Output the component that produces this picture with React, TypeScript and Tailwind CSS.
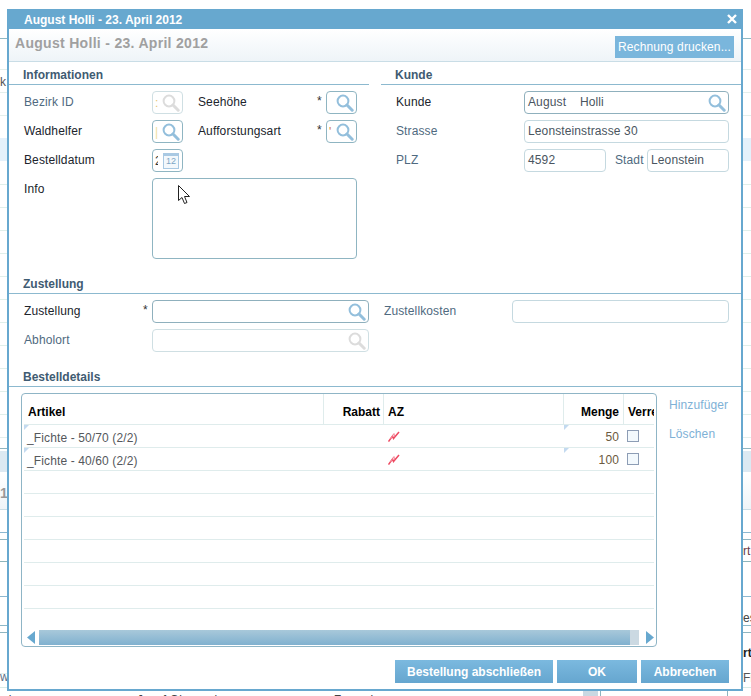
import type { ReactNode } from "react";

const bgLines = [
  { top: 38, color: "#8db8c4" },
  { top: 69, color: "#e4efec" },
  { top: 92, color: "#e4efec" },
  { top: 115, color: "#e4efec" },
  { top: 184, color: "#e0efea" },
  { top: 207, color: "#e0efea" },
  { top: 230, color: "#e0efea" },
  { top: 253, color: "#e0efea" },
  { top: 276, color: "#e0efea" },
  { top: 299, color: "#e0efea" },
  { top: 322, color: "#e0efea" },
  { top: 345, color: "#e0efea" },
  { top: 368, color: "#e0efea" },
  { top: 391, color: "#e0efea" },
  { top: 414, color: "#e0efea" },
  { top: 437, color: "#e4efec" },
  { top: 448, color: "#8fb5c0" },
  { top: 509, color: "#c9dde6" },
  { top: 532, color: "#8db8d0" },
  { top: 539, color: "#8fb5c0" },
  { top: 561, color: "#8db5bb" },
  { top: 596, color: "#8db8d0" },
  { top: 625, color: "#8db8c8" },
  { top: 632, color: "#8fb5c0" },
  { top: 673, color: "#e4efec" },
  { top: 687, color: "#d8ebe6" },
];

const rows = [
  { name: "_Fichte - 50/70 (2/2)", qty: "50" },
  { name: "_Fichte - 40/60 (2/2)", qty: "100" },
  null,
  null,
  null,
  null,
  null,
  null,
];

function SearchIcon({ off }: { off?: boolean }) {
  const c = off ? "#dcdcdc" : "#93bfdc";
  return (
    <svg width="18" height="18" viewBox="0 0 18 18" fill="none" className="shrink-0">
      <circle cx="7" cy="7" r="5.4" stroke={c} strokeWidth="2" />
      <path d="M11 11L16.2 16.2" stroke={c} strokeWidth="3" strokeLinecap="round" />
    </svg>
  );
}

function Label({ children, w, dim, className }: { children: ReactNode; w: string; dim?: boolean; className?: string }) {
  return (
    <div className={`${w} ${dim ? "text-[#4f6a80]" : "text-[#20242c]"} shrink-0 pb-[2px] ${className ?? ""}`}>{children}</div>
  );
}

function Star() {
  return <div className="w-[9px] shrink-0 text-[#333] leading-[14px] self-start mt-[3px]">*</div>;
}

function SectionHead({ children, className }: { children: ReactNode; className?: string }) {
  return (
    <div className={`h-[23px] pt-[4px] border-b border-[#8cb9cf] flex items-center font-bold tracking-normal text-[#3f5b72] ${className ?? ""}`}>
      {children}
    </div>
  );
}

function MiniSearch({ off, bit, bitColor }: { off?: boolean; bit?: string; bitColor?: string }) {
  return (
    <div className={`w-[31px] h-[23px] shrink-0 rounded-[4px] border flex items-center justify-between pl-[2px] pr-[2px] overflow-hidden ${off ? "border-[#cfdfe3]" : "border-[#8fb5c2]"}`}>
      <span className={`w-[3px] overflow-hidden ${bitColor ?? ""}`}>{bit}</span>
      <SearchIcon off={off} />
    </div>
  );
}

function Lightning() {
  return (
    <svg width="12" height="11" viewBox="0 0 12 11" fill="none">
      <path d="M0.5 10.5L4.5 5L5.5 7.5L11 1" stroke="#ee4a62" strokeWidth="1.5" />
      <path d="M2.5 8L6 2.5L6.5 5" stroke="#f58a9a" strokeWidth="1" />
    </svg>
  );
}

function Corner({ className }: { className?: string }) {
  return <div className={`absolute top-0 w-0 h-0 border-t-[5px] border-r-[5px] border-t-[#c3daf0] border-r-transparent ${className ?? ""}`} />;
}

function Btn({ children, w }: { children: ReactNode; w: string }) {
  return (
    <div className={`${w} h-[23px] flex items-center justify-center font-bold tracking-normal text-white bg-gradient-to-b from-[#7bb9df] to-[#66a6cf]`}>
      {children}
    </div>
  );
}

export default function App() {
  return (
    <div className="relative w-[751px] h-[696px] overflow-hidden bg-white text-[12px] tracking-[0.12px] font-['Liberation_Sans',Arial,sans-serif]">
      {/* page behind the dialog */}
      {bgLines.map((l) => (
        <div key={l.top} className="absolute left-0 right-0 h-px" style={{ top: l.top, background: l.color }} />
      ))}
      <div className="absolute left-0 right-0 top-[138px] h-[23px] bg-[#e4f1fb]" />
      <div className="absolute left-0 right-0 top-[451px] h-[21px] bg-[#dce9f2]" />
      <div className="absolute left-0 right-0 top-[473px] h-[36px] bg-gradient-to-b from-white to-[#eef4f8]" />
      <div className="absolute left-0 top-[73px] text-[#555]">k</div>
      <div className="absolute left-0 top-[483px] text-[14px] font-bold text-[#999]">1</div>
      <div className="absolute left-0 top-[668px] text-[#5a6f88]">w</div>
      <div className="absolute left-[743px] top-[542px] text-[#6b3b45]">rt</div>
      <div className="absolute left-[743px] top-[609px] text-[#444]">es</div>
      <div className="absolute left-[743px] top-[644px] font-bold text-[#222]">rt</div>
      <div className="absolute left-[743px] top-[669px] text-[#555]">Fi</div>
      <div className="absolute left-0 top-[691px] text-[#444]">wig</div>
      <div className="absolute left-[137px] top-[691px] text-[#444]">Josef Obergruber</div>
      <div className="absolute left-[334px] top-[691px] text-[#444]">Zugewiesen</div>
      <div className="absolute left-[583px] top-[691px] w-[15px] h-[5px] bg-[#c9d8e2]" />
      <div className="absolute left-[600px] top-[691px] w-px h-[5px] bg-[#8fb5c0]" />
      <div className="absolute left-[727px] top-[691px] w-px h-[5px] bg-[#8fb5c0]" />

      {/* dialog */}
      <div className="absolute left-[7px] top-[9px] w-[736px] h-[682px] flex flex-col">
        <div className="h-[20px] shrink-0 bg-[#67a8cf] flex items-center justify-between pl-[17px] pr-[6px] font-bold tracking-normal text-white">
          <span className="pt-[2px]">August Holli - 23. April 2012</span>
          <svg width="10" height="10" viewBox="0 0 10 10" fill="none">
            <path d="M1 1L9 9M9 1L1 9" stroke="white" strokeWidth="2.4" />
          </svg>
        </div>
        <div className="flex-1 flex flex-col border-x-2 border-b-[2px] border-[#67a8cf] bg-white min-h-0">
          <div className="h-[33px] shrink-0 border-b border-[#c9dde6] bg-gradient-to-b from-white to-[#eef4f8] flex items-center justify-between pl-[6px] pr-[7px]">
            <span className="text-[14px] font-bold tracking-[0.3px] text-[#a0a0a0] mb-[4px]">August Holli - 23. April 2012</span>
            <div className="w-[119px] h-[22px] mt-[4px] bg-[#7ab6dc] text-white flex items-center justify-center">
              Rechnung drucken...
            </div>
          </div>

          <div className="grid grid-cols-[360px_360px] gap-x-3">
            <div>
              <SectionHead className="pl-[14px]">Informationen</SectionHead>
              <div className="pt-[6px] pl-[15px] flex flex-col gap-[6px]">
                <div className="flex items-center h-[23px]">
                  <Label w="w-[128px]" dim>Bezirk ID</Label>
                  <MiniSearch off bit=":" bitColor="text-[#e8c878]" />
                  <Label w="w-[119px]" className="ml-[15px]">Seehöhe</Label>
                  <Star />
                  <MiniSearch />
                </div>
                <div className="flex items-center h-[23px]">
                  <Label w="w-[128px]">Waldhelfer</Label>
                  <MiniSearch bit="|" bitColor="text-[#f0e0a0]" />
                  <Label w="w-[119px]" className="ml-[15px]">Aufforstungsart</Label>
                  <Star />
                  <MiniSearch bit="'" bitColor="text-[#d08040]" />
                </div>
                <div className="flex items-center h-[23px]">
                  <Label w="w-[128px]">Bestelldatum</Label>
                  <div className="w-[31px] h-[23px] rounded-[4px] border border-[#8fb5c2] flex items-center justify-between pl-[2px] pr-[3px]">
                    <span className="w-[3px] overflow-hidden text-[#333]">2</span>
                    <div className="w-[16px] h-[16px] border border-[#a9c9e3] border-t-[3px] bg-[#f3f8fc] flex items-center justify-center text-[9px] tracking-normal leading-none text-[#7da6c6]">
                      12
                    </div>
                  </div>
                </div>
                <div className="flex items-start h-[81px]">
                  <Label w="w-[128px]" className="pt-[2px]">Info</Label>
                  <div className="w-[205px] h-[81px] rounded-[4px] border border-[#8fb5c2]" />
                </div>
              </div>
            </div>
            <div>
              <SectionHead className="pl-[14px]">Kunde</SectionHead>
              <div className="pt-[6px] pl-[15px] flex flex-col gap-[6px]">
                <div className="flex items-center h-[23px]">
                  <Label w="w-[128px]">Kunde</Label>
                  <div className="w-[205px] h-[23px] rounded-[4px] border border-[#8fb0bd] flex items-center justify-between pl-[3px] pr-[2px] text-[#4a5560]">
                    <span className="whitespace-pre pb-[2px]">August    Holli</span>
                    <SearchIcon />
                  </div>
                </div>
                <div className="flex items-center h-[23px]">
                  <Label w="w-[128px]" dim>Strasse</Label>
                  <div className="w-[205px] h-[23px] rounded-[4px] border border-[#c5d9e0] flex items-center pl-[3px] pb-[2px] text-[#4a5560]">
                    Leonsteinstrasse 30
                  </div>
                </div>
                <div className="flex items-center h-[23px]">
                  <Label w="w-[128px]" dim>PLZ</Label>
                  <div className="w-[82px] h-[23px] rounded-[4px] border border-[#c5d9e0] flex items-center pl-[3px] pb-[2px] text-[#4a5560]">
                    4592
                  </div>
                  <Label w="w-[32px]" dim className="ml-[9px]">Stadt</Label>
                  <div className="w-[82px] h-[23px] rounded-[4px] border border-[#c5d9e0] flex items-center pl-[3px] pb-[2px] text-[#4a5560]">
                    Leonstein
                  </div>
                </div>
              </div>
            </div>
          </div>

          <SectionHead className="mt-[12px] pl-[14px]">Zustellung</SectionHead>
          <div className="pt-[6px] pl-[15px] flex flex-col gap-[6px]">
            <div className="flex items-center h-[23px]">
              <Label w="w-[119px]">Zustellung</Label>
              <Star />
              <div className="w-[217px] h-[23px] rounded-[4px] border border-[#8fb0bd] flex items-center justify-end pr-[2px]">
                <SearchIcon />
              </div>
              <Label w="w-[128px]" dim className="ml-[15px]">Zustellkosten</Label>
              <div className="w-[217px] h-[23px] rounded-[4px] border border-[#c5d9e0]" />
            </div>
            <div className="flex items-center h-[23px]">
              <Label w="w-[128px]" dim>Abholort</Label>
              <div className="w-[217px] h-[23px] rounded-[4px] border border-[#cfdfe3] flex items-center justify-end pr-[2px]">
                <SearchIcon off />
              </div>
            </div>
          </div>

          <SectionHead className="mt-[12px] pl-[14px]">Bestelldetails</SectionHead>
          <div className="pt-[6px] pl-[12px] flex items-start">
            <div className="w-[636px] h-[254px] shrink-0 rounded-[4px] border border-[#8fb5c6] px-[2px] flex flex-col">
              <div className="h-[31px] shrink-0 grid grid-cols-[300px_60px_180px_60px_30px] font-bold tracking-normal text-black border-b border-[#dfecec]">
                <div className="border-r border-[#dfecec] flex items-center pl-[4px] pt-[5px]">Artikel</div>
                <div className="border-r border-[#dfecec] flex items-center justify-end pr-[3px] pt-[5px]">Rabatt</div>
                <div className="border-r border-[#dfecec] flex items-center pl-[4px] pt-[5px]">AZ</div>
                <div className="border-r border-[#dfecec] flex items-center justify-end pr-[4px] pt-[5px]">Menge</div>
                <div className="flex items-center pl-[4px] pt-[5px] overflow-hidden whitespace-nowrap">Verre</div>
              </div>
              {rows.map((r, i) => (
                <div key={i} className="relative h-[23px] shrink-0 grid grid-cols-[300px_60px_180px_60px_30px] items-center border-b border-[#dfecec] text-[#55585c]">
                  {r && (
                    <>
                      <Corner className="left-0" />
                      <Corner className="left-[540px]" />
                      <div className="pl-[3px] pt-[4px]">{r.name}</div>
                      <div />
                      <div className="pl-[4px] flex items-center"><Lightning /></div>
                      <div className="text-right pr-[5px] pt-[2px] text-[#6b5a40]">{r.qty}</div>
                      <div className="pl-[3px] flex items-center">
                        <div className="w-[12px] h-[12px] border border-[#8d9db5] bg-[#f3f9fd]" />
                      </div>
                    </>
                  )}
                </div>
              ))}
              <div className="mt-[21px] h-[15px] shrink-0 flex items-center">
                <svg width="15" height="15" viewBox="0 0 15 15" className="shrink-0">
                  <path d="M3 7.5L11 1V14Z" fill="#67a8cf" />
                </svg>
                <div className="w-[591px] h-[15px] shrink-0 bg-gradient-to-b from-[#a8c8da] to-[#80b1cf]" />
                <div className="w-[9px] h-[15px] shrink-0 bg-[#cbd9e2]" />
                <svg width="15" height="15" viewBox="0 0 15 15" className="shrink-0 ml-[3px]">
                  <path d="M12 7.5L4 1V14Z" fill="#67a8cf" />
                </svg>
              </div>
            </div>
            <div className="ml-[12px] flex flex-col gap-[15px] text-[#7eb1d6] pt-[5px]">
              <div className="leading-[14px]">Hinzufüger</div>
              <div className="leading-[14px]">Löschen</div>
            </div>
          </div>

          <div className="mt-[13px] pr-[12px] flex justify-end gap-1">
            <Btn w="w-[158px]">Bestellung abschließen</Btn>
            <Btn w="w-[80px]">OK</Btn>
            <Btn w="w-[88px]">Abbrechen</Btn>
          </div>
        </div>
      </div>

      {/* mouse pointer */}
      <svg width="13" height="20" viewBox="0 0 13 20" className="absolute left-[178px] top-[185px]">
        <path d="M0.5 0.5V15.5L4 12.5L6.5 18.5L9 17.5L6.5 11.5H11.5Z" fill="white" stroke="#222" strokeWidth="1" />
      </svg>
    </div>
  );
}
